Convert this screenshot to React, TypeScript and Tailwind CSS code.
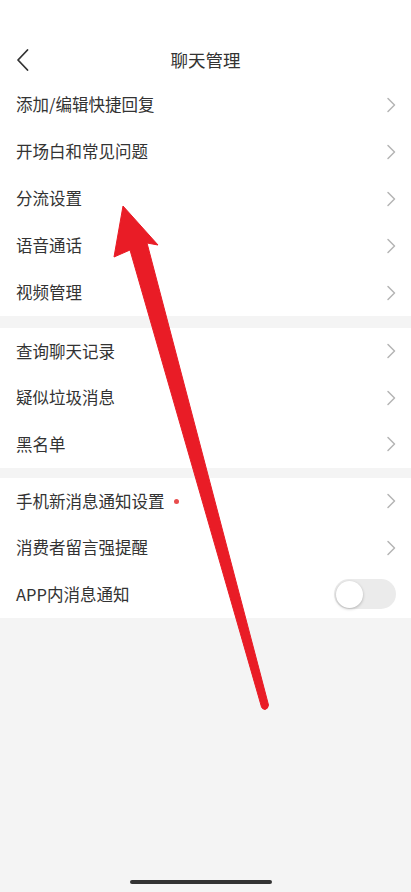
import React from "react";

const font = { fontFamily: '"Noto Sans CJK SC", "Noto Sans", sans-serif' };

function Chevron() {
  return (
    <svg width="10" height="16" viewBox="0 0 10 16" fill="none" className="shrink-0">
      <path d="M2 1.5 L8.5 8 L2 14.5" stroke="#b5b5b5" strokeWidth="1.5" strokeLinecap="round" strokeLinejoin="round" />
    </svg>
  );
}

function Row({ label, h, dot }: { label: string; h: string; dot?: boolean }) {
  return (
    <div className={`flex items-center justify-between pl-4 pr-[15px] ${h}`}>
      <div className="flex items-center">
        <span className="text-[16.5px] text-[#333]">{label}</span>
        {dot && <span className="ml-[9px] w-[5px] h-[5px] rounded-full bg-[#e84d4d]" />}
      </div>
      <Chevron />
    </div>
  );
}

function Toggle() {
  return (
    <div className="w-[62px] h-[30px] rounded-full bg-[#ebebeb] p-[1.5px] flex items-center">
      <div className="w-[27px] h-[27px] rounded-full bg-white shadow-[0_1px_3px_rgba(0,0,0,0.25)]" />
    </div>
  );
}

export default function App() {
  return (
    <div className="relative min-h-[892px] bg-[#f4f4f4] flex flex-col" style={font}>
      <div className="bg-white">
        <div className="h-[81px] pt-[36px] relative flex items-start justify-center">
          <svg width="14" height="24" viewBox="0 0 14 24" fill="none" className="absolute left-[16px] top-[48px]">
            <path d="M11.5 2 L2 12 L11.5 22" stroke="#333" strokeWidth="1.8" strokeLinecap="round" strokeLinejoin="round" />
          </svg>
          <span className="text-[17.5px] text-[#333] leading-[48px]">聊天管理</span>
        </div>
        <Row label="添加/编辑快捷回复" h="h-[47px]" />
        <Row label="开场白和常见问题" h="h-[47px]" />
        <Row label="分流设置" h="h-[47px]" />
        <Row label="语音通话" h="h-[47px]" />
        <Row label="视频管理" h="h-[47px]" />
      </div>
      <div className="h-[12px]" />
      <div className="bg-white">
        <Row label="查询聊天记录" h="h-[46.5px]" />
        <Row label="疑似垃圾消息" h="h-[46.5px]" />
        <Row label="黑名单" h="h-[46.5px]" />
      </div>
      <div className="h-[10.5px]" />
      <div className="bg-white">
        <Row label="手机新消息通知设置" h="h-[46.5px]" dot />
        <Row label="消费者留言强提醒" h="h-[46.5px]" />
        <div className="flex items-center justify-between pl-4 pr-[15px] h-[46.5px]">
          <span className="text-[16.5px] text-[#333]">APP内消息通知</span>
          <Toggle />
        </div>
      </div>
      <div className="flex-1" />
      <div className="h-[13px] flex justify-center pr-[9px]">
        <div className="w-[142px] h-[4px] rounded-full bg-[#333] mt-[1px]" />
      </div>

      <svg
        className="absolute left-0 top-0 pointer-events-none"
        width="411"
        height="892"
        viewBox="0 0 411 892"
      >
        <path
          d="M123 206 L158 245 L147 243 L268.5 705 Q268 709 265 709.5 Q262 709 261.5 707 L130 250 L114 257 Z"
          fill="#e91c26"
          stroke="#e91c26"
          strokeWidth="1"
          strokeLinejoin="round"
        />
      </svg>
    </div>
  );
}
